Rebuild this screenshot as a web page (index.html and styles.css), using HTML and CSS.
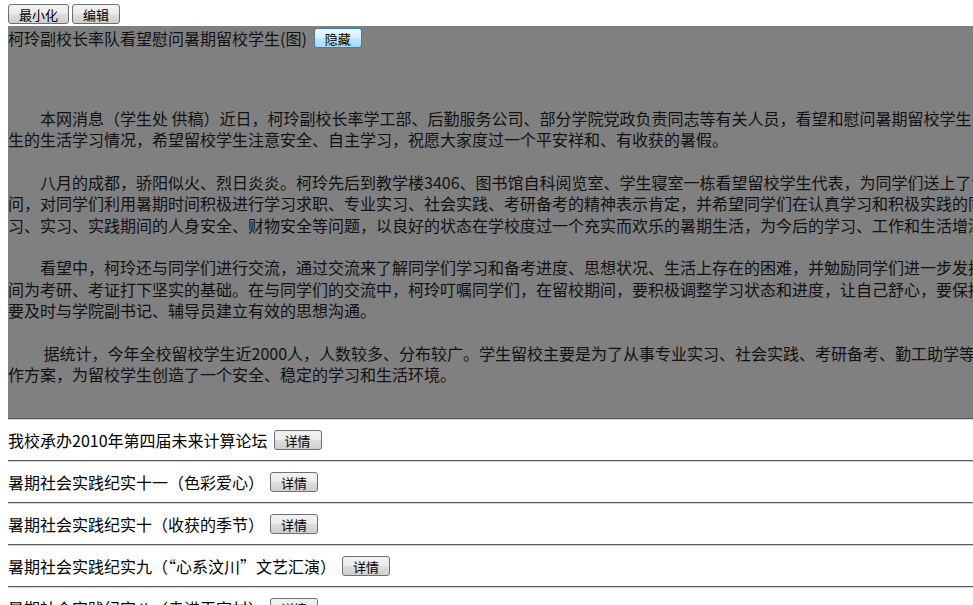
FILE: index.html
```html
<!DOCTYPE html>
<html lang="zh-CN">

<head>
    <meta charset="UTF-8">
    <title>新闻</title>
    <link rel="stylesheet" href="styles.css">
</head>

<body>
    <div class="page">
        <div class="toolbar">
            <button class="btn">最小化</button>
            <button class="btn">编辑</button>
        </div>

        <div class="news">
            <div class="news-title">
                <span>柯玲副校长率队看望慰问暑期留校学生(图)</span>
                <button class="btn btn-active">隐藏</button>
            </div>
            <div class="news-body">
                <p>本网消息（学生处 供稿）近日，柯玲副校长率学工部、后勤服务公司、部分学院党政负责同志等有关人员，看望和慰问暑期留校学生，了解留校学<br>生的生活学习情况，希望留校学生注意安全、自主学习，祝愿大家度过一个平安祥和、有收获的暑假。</p>
                <p>八月的成都，骄阳似火、烈日炎炎。柯玲先后到教学楼3406、图书馆自科阅览室、学生寝室一栋看望留校学生代表，为同学们送上了清凉饮品和节日慰<br>问，对同学们利用暑期时间积极进行学习求职、专业实习、社会实践、考研备考的精神表示肯定，并希望同学们在认真学习和积极实践的同时，注意学<br>习、实习、实践期间的人身安全、财物安全等问题，以良好的状态在学校度过一个充实而欢乐的暑期生活，为今后的学习、工作和生活增添动力。</p>
                <p>看望中，柯玲还与同学们进行交流，通过交流来了解同学们学习和备考进度、思想状况、生活上存在的困难，并勉励同学们进一步发扬刻苦学习的精神，利用暑期时<br>间为考研、考证打下坚实的基础。在与同学们的交流中，柯玲叮嘱同学们，在留校期间，要积极调整学习状态和进度，让自己舒心，要保持良好心态，遇到问题<br>要及时与学院副书记、辅导员建立有效的思想沟通。</p>
                <p>&nbsp;据统计，今年全校留校学生近2000人，人数较多、分布较广。学生留校主要是为了从事专业实习、社会实践、考研备考、勤工助学等。学校各部门制定了详细的工<br>作方案，为留校学生创造了一个安全、稳定的学习和生活环境。</p>
            </div>
        </div>
        <hr>

        <div class="item"><span>我校承办2010年第四届未来计算论坛</span><button class="btn">详情</button></div>
        <hr>
        <div class="item"><span>暑期社会实践纪实十一（色彩爱心）</span><button class="btn">详情</button></div>
        <hr>
        <div class="item"><span>暑期社会实践纪实十（收获的季节）</span><button class="btn">详情</button></div>
        <hr>
        <div class="item"><span>暑期社会实践纪实九（“心系汶川”文艺汇演）</span><button class="btn">详情</button></div>
        <hr>
        <div class="item"><span>暑期社会实践纪实八（走进王家村）</span><button class="btn">详情</button></div>
        <hr>
    </div>
</body>

</html>
```

FILE: styles.css
```css
html {
    overflow: hidden;
}

body {
    margin: 4px 0 0 8px;
    font-family: "Noto Sans CJK SC", "Liberation Sans", sans-serif;
    font-size: 16px;
    color: #000;
    background: #fff;
}

.page {
    width: 1220px;
}

.toolbar {
    display: flex;
    gap: 3px;
    margin-bottom: 2px;
}

.btn {
    font-family: "Noto Sans CJK SC", "Liberation Sans", sans-serif;
    font-size: 13px;
    line-height: 17px;
    height: 20px;
    padding: 0 10px;
    border: 1px solid #707070;
    border-radius: 3px;
    background: linear-gradient(#f2f2f2 0%, #ebebeb 50%, #dddddd 51%, #cfcfcf 100%);
    color: #000;
    cursor: pointer;
}

.btn-active {
    border-color: #3c7fb1;
    background: linear-gradient(#eaf6fd 0%, #d9f0fc 50%, #bee6fd 51%, #a7d9f5 100%);
}

.news {
    background: #808080;
    color: #111;
    padding-bottom: 33px;
}

.news-title {
    display: flex;
    align-items: center;
    gap: 7px;
    height: 24px;
    line-height: 21px;
}

.news-body {
    padding-top: 58px;
    line-height: 21.33px;
}

.news-body p {
    margin: 0 0 21.33px;
    text-indent: 2em;
    white-space: nowrap;
}

.news-body p:last-child {
    margin-bottom: 0;
}

hr {
    margin: 0;
    height: 0;
    border: none;
    border-top: 1px solid #5a5a5a;
    border-bottom: 1px solid #d4d4d4;
}

.item {
    display: flex;
    align-items: center;
    gap: 6px;
    height: 40px;
}
```
